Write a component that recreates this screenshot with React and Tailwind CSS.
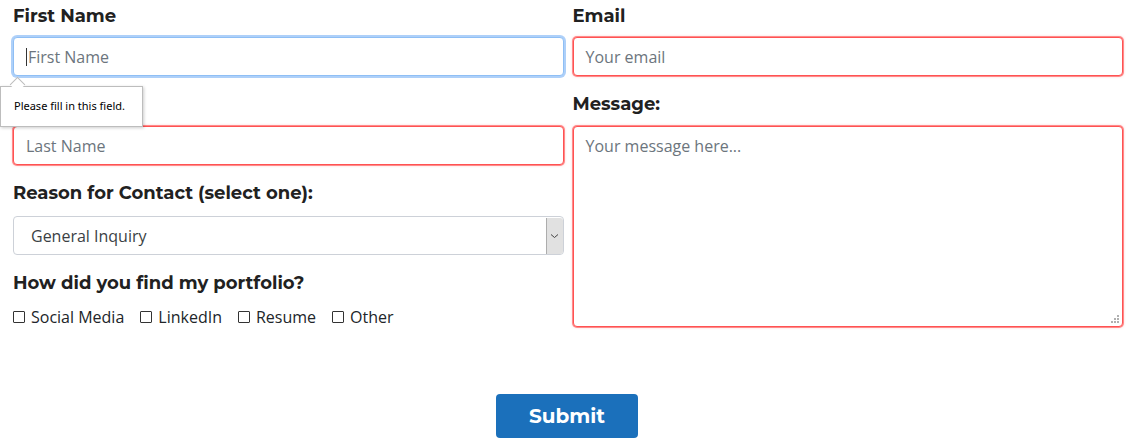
import React from "react";

const labelCls = "block text-[18px] font-bold text-[#212121] leading-[22px] [font-family:Montserrat,Inter,'DejaVu_Sans',sans-serif]";
const inputBase = "h-[39px] w-full rounded-[4px] bg-white px-[12px] text-[16px] text-[#212529] [font-family:'Open_Sans',sans-serif] flex items-center";
const redCls = "border border-[#ff5252] shadow-[0_0_0_1px_rgba(255,110,110,0.75),0_0_3px_rgba(255,80,80,0.5)]";

function Checkbox({ label }) {
  return (
    <label className="flex items-center gap-[6px] text-[16px] text-[#212529] [font-family:'Open_Sans',sans-serif]">
      <span className="w-[12px] h-[12px] border border-[#333] rounded-[1px] bg-white inline-block" />
      <span>{label}</span>
    </label>
  );
}

export default function App() {
  return (
    <div className="w-[1130px] h-[443px] bg-white relative overflow-hidden">
      <div className="grid grid-cols-2 gap-x-[9px] pl-[13px] pr-[7px] pt-[5px]">
        {/* Left column */}
        <div className="flex flex-col">
          <span className={labelCls}>First Name</span>
          <div className={`${inputBase} mt-[10px] border border-[#8fbff5] shadow-[0_0_0_2px_rgba(160,200,248,0.85)]`}>
            <span className="w-px h-[18px] bg-[#333] mr-[1px]" />
            <span className="text-[#6c757d]">First Name</span>
          </div>
          <span className={`${labelCls} mt-[17px]`}>Last Name</span>
          <div className={`${inputBase} mt-[11px] ${redCls}`}>
            <span className="text-[#6c757d]">Last Name</span>
          </div>
          <span className={`${labelCls} mt-[17px]`}>Reason for Contact (select one):</span>
          <div className={`${inputBase} mt-[12px] h-[38px] border border-[#cdd1d8] pl-[17px] pr-0 justify-between`}>
            <span className="text-[#3b3f44]">General Inquiry</span>
            <span className="h-[36px] w-[17px] bg-[#e1e1e1] border-l border-[#adadad] rounded-r-[3px] flex items-center justify-center">
              <svg width="9" height="6" viewBox="0 0 9 6">
                <path d="M1 1.5 L4.5 4.5 L8 1.5" fill="none" stroke="#444" strokeWidth="1" />
              </svg>
            </span>
          </div>
          <span className={`${labelCls} mt-[17px]`}>How did you find my portfolio?</span>
          <div className="flex items-center gap-[16px] mt-[11px]">
            <Checkbox label="Social Media" />
            <Checkbox label="LinkedIn" />
            <Checkbox label="Resume" />
            <Checkbox label="Other" />
          </div>
        </div>
        {/* Right column */}
        <div className="flex flex-col">
          <span className={labelCls}>Email</span>
          <div className={`${inputBase} mt-[10px] ${redCls}`}>
            <span className="text-[#6c757d]">Your email</span>
          </div>
          <span className={`${labelCls} mt-[17px]`}>Message:</span>
          <div className={`relative mt-[11px] h-[201px] w-full rounded-[4px] bg-white px-[12px] pt-[7px] text-[16px] [font-family:'Open_Sans',sans-serif] ${redCls}`}>
            <span className="text-[#6c757d]">Your message here...</span>
            <svg className="absolute right-[3px] bottom-[3px]" width="8" height="8" viewBox="0 0 8 8">
              <rect x="6" y="0" width="2" height="2" fill="#b0b0b0" />
              <rect x="3" y="3" width="2" height="2" fill="#b0b0b0" />
              <rect x="6" y="3" width="2" height="2" fill="#b0b0b0" />
              <rect x="0" y="6" width="2" height="2" fill="#b0b0b0" />
              <rect x="3" y="6" width="2" height="2" fill="#b0b0b0" />
              <rect x="6" y="6" width="2" height="2" fill="#b0b0b0" />
            </svg>
          </div>
        </div>
      </div>
      <div className="flex justify-center mt-[65px] pl-[4px]">
        <button className="w-[142px] h-[44px] rounded-[4px] bg-[#1b70bb] text-white text-[20px] font-bold [font-family:Montserrat,Inter,'DejaVu_Sans',sans-serif]">
          Submit
        </button>
      </div>

      {/* Validation tooltip */}
      <div className="absolute left-0 top-[86px] w-[143px] h-[41px] bg-white border border-[#bdbdbd] shadow-[1px_1px_3px_rgba(0,0,0,0.2)] flex items-center pl-[13px] text-[11px] text-black [font-family:'Noto_Sans',sans-serif]">
        Please fill in this field.
      </div>
      <div className="absolute left-[12px] top-[79px] w-[11px] h-[11px] bg-white border-l border-t border-[#bdbdbd] rotate-45" />
    </div>
  );
}
